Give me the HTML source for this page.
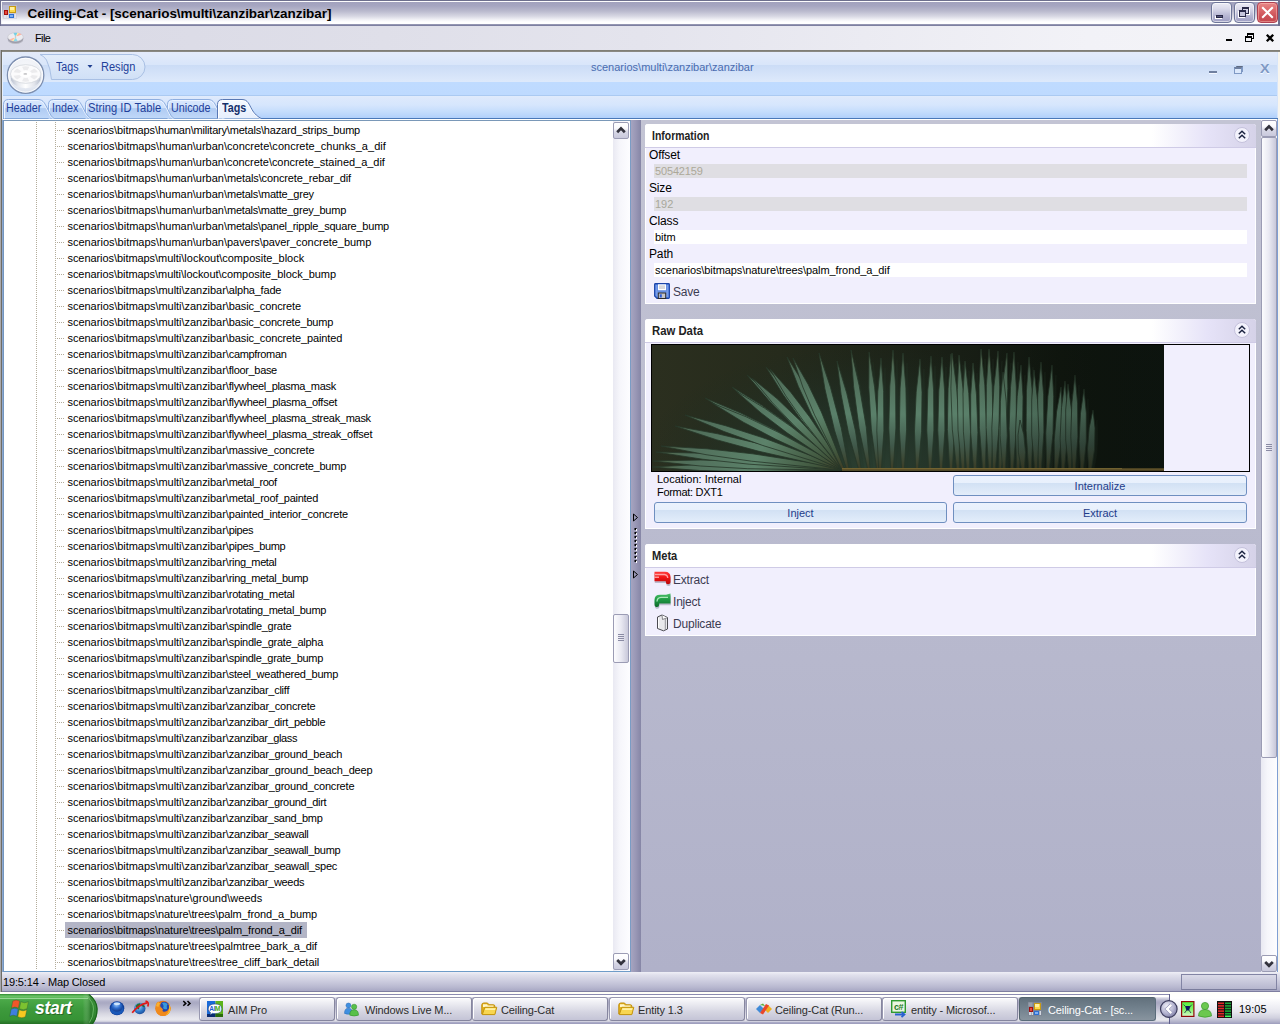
<!DOCTYPE html>
<html><head><meta charset="utf-8"><title>Ceiling-Cat - [scenarios\multi\zanzibar\zanzibar]</title>
<style>
html,body{margin:0;padding:0}
body{width:1280px;height:1024px;position:relative;overflow:hidden;background:#d9d9e5;font:11px "Liberation Sans",sans-serif;color:#000}
.a{position:absolute}
.t{position:absolute;white-space:nowrap;line-height:14px}
.sx{transform-origin:0 0}
svg{position:absolute;overflow:visible}
/* title bar */
#title{left:0;top:0;width:1280px;height:26px;background:linear-gradient(#6d6f8d 0,#6d6f8d 1px,#fdfdfe 1px,#fdfdfe 2px,#a1a1bd 2px,#a6a6c1 6px,#b9b9cd 11px,#d6d6e2 16px,#f4f4f8 20px,#fff 22px,#fff 24px,#9496b2 24px,#9496b2 25px,#7d7fa0 25px,#7d7fa0 26px)}
#title .cap{left:27.500px;top:5.500px;font:bold 13.500px "Liberation Sans",sans-serif;line-height:16px;color:#000;letter-spacing:-0.06px}
.cb{position:absolute;top:2px;width:21px;height:21px;border-radius:4px;box-sizing:border-box;border:1px solid #6e7699;background:linear-gradient(#ececf5 0,#dadaea 30%,#b8b8d4 65%,#9d9dc2 100%);box-shadow:0 0 0 1px rgba(255,255,255,.55) inset}
/* menu */
#menu{left:0;top:26px;width:1280px;height:24px;background:linear-gradient(90deg,#d9d9e5 0,#dfdfe9 30%,#e4e4ed 50%,#f2f2f7 85%,#f4f4f8 100%)}
/* tree */
.row{position:absolute;left:67.5px;height:16px;line-height:15px;white-space:nowrap;font-size:11px}
/* right panels */
.pnl{position:absolute;left:645px;width:611px;background:#f1effd;border-radius:3px 3px 0 0;box-sizing:border-box;border:1px solid #fff;border-top:0}
.pnl>*{margin-left:-1px}
.ph{position:absolute;left:0;top:0;width:611px;height:23px;border-radius:3px 3px 0 0;background:linear-gradient(90deg,#fff 0,#fff 83%,#e6e3f8 92%,#d5d2e8 100%);border-bottom:1px solid #cfcbe6}
.ph b{position:absolute;left:6.500px;top:5px;font:bold 12px "Liberation Sans",sans-serif;line-height:14px;color:#222;transform-origin:0 0;white-space:nowrap}
.tb{position:absolute;left:9px;width:593px;height:14px;line-height:14px;font-size:11px;white-space:nowrap;text-indent:1px}
.btn{position:absolute;height:21px;box-sizing:border-box;padding-top:1px;border:1px solid #6f8fc0;border-radius:3px;text-align:center;line-height:19px;color:#1e3c8a;font-size:11px;background:linear-gradient(#ebf2fd 0,#e8f0fc 36%,#d2e1f4 39%,#e3edfa 100%)}
.tk{position:absolute;top:997px;height:24px;width:136px;box-sizing:border-box;border-radius:3px;border:1px solid #9898b0;border-right-color:#86869f;border-bottom-color:#86869f;box-shadow:1px 1px 0 #fff inset;background:linear-gradient(#fbfbfd,#ececf2 25%,#d4d4e1 65%,#c4c4d6);font:11px "Liberation Sans",sans-serif;color:#2c2c2c}
.tk span{position:absolute;left:28px;top:4.500px;line-height:14px;white-space:nowrap;letter-spacing:-0.12px}
</style></head><body>

<div class="a" id="title">
 <svg style="left:3px;top:5px" width="14" height="14" viewBox="0 0 14 14">
  <rect x="0" y="0" width="14" height="14" fill="#c9c9d6" opacity=".55"/>
  <rect x="0.5" y="0.5" width="4" height="4" fill="#b8b8d2"/>
  <rect x="1" y="10" width="2" height="3" fill="#e4e4ee"/><rect x="3.5" y="10" width="1.5" height="3" fill="#e4e4ee"/><rect x="11.5" y="9" width="1.5" height="4" fill="#e4e4ee"/>
  <rect x="6" y="1" width="7" height="7" fill="#c79a13"/><rect x="7" y="2" width="5" height="5" fill="#fcd84a"/><rect x="7" y="2" width="4" height="3" fill="#fff0a0"/>
  <rect x="1" y="5" width="4" height="5" fill="#a30f0f"/><rect x="2" y="6" width="2" height="3" fill="#e84a3a"/>
  <rect x="6" y="9" width="5" height="4" fill="#2f6fd0"/><rect x="7" y="10" width="3" height="2" fill="#7fb0f4"/>
 </svg>
 <div class="a" style="left:0;top:0;width:1px;height:26px;background:#6d6f8d"></div><div class="a" style="left:1px;top:1px;width:1px;height:23px;background:#f4f4f8"></div>
 <div class="t cap">Ceiling-Cat - [scenarios\multi\zanzibar\zanzibar]</div>
 <div class="cb" style="left:1211px"><div class="a" style="left:4px;top:12px;width:7px;height:3px;background:#54547a;border:1px solid #2a2a48;box-sizing:border-box;box-shadow:-1px 1px 0 #fff"></div></div>
 <div class="cb" style="left:1234px">
   <div class="a" style="left:7px;top:4px;width:7px;height:7px;box-sizing:border-box;border:1px solid #2a2a48;border-top-width:2px;box-shadow:1px 1px 0 #fff"></div>
   <div class="a" style="left:4px;top:7px;width:7px;height:7px;box-sizing:border-box;border:1px solid #2a2a48;border-top-width:2px;background:#c6c6dc;box-shadow:-1px 1px 0 #fff"></div>
 </div>
 <div class="cb" style="left:1257px;border-color:#b04050;background:linear-gradient(#e88888 0,#dc6a6c 35%,#cc5258 70%,#c4484e 100%);box-shadow:0 0 0 1px rgba(255,200,190,.45) inset">
   <svg style="left:3px;top:3px" width="13" height="13" viewBox="0 0 13 13"><path d="M1.200 1.200 L11.800 11.800 M11.800 1.200 L1.200 11.800" stroke="#fff" stroke-width="2" stroke-linecap="butt"/></svg>
 </div>
</div>

<div class="a" id="menu">
 <svg style="left:7px;top:5px" width="17" height="13" viewBox="0 0 17 13">
  <ellipse cx="8.5" cy="8.800" rx="7.800" ry="4.300" fill="#b9b9c4"/><ellipse cx="8.5" cy="7.600" rx="7.800" ry="4.300" fill="#9c9ca8"/>
  <ellipse cx="8.5" cy="6" rx="7.8" ry="4.3" fill="#ececf0" stroke="#c4c4cc" stroke-width=".6"/>
  <path d="M8.5 6 L6.5 2 A7.8 4.3 0 0 1 10.5 2 Z" fill="#74cfe4"/>
  <path d="M8.5 6 L11 2.1 A7.8 4.3 0 0 1 14.6 3.5 Z" fill="#ffb0a0"/>
  <path d="M8.5 6 L10.5 10 A7.8 4.3 0 0 1 6.5 10 Z" fill="#8ad8ea"/>
  <path d="M8.5 6 L6 9.9 A7.8 4.3 0 0 1 2.4 8.5 Z" fill="#ffb8a8"/>
  <path d="M8.5 6 L6.4 10 A7.8 4.3 0 0 1 5 9.7 Z" fill="#fff3a0"/>
  <path d="M8.5 6 L10.6 2 A7.8 4.3 0 0 1 12 2.3 Z" fill="#fff3a0"/>
  <ellipse cx="8.5" cy="6" rx="2.2" ry="1.3" fill="#f4f4f6"/><ellipse cx="8.5" cy="6" rx="1" ry=".7" fill="#b4b4bc"/>
 </svg>
 <div class="t" style="left:35px;top:5px;font-size:11px;letter-spacing:-.6px">File</div>
 <div class="a" style="left:1226px;top:13px;width:6px;height:2px;background:#000"></div>
 <div class="a" style="left:1247px;top:7px;width:7px;height:6px;box-sizing:border-box;border:1px solid #000;border-top-width:2px"></div>
 <div class="a" style="left:1245px;top:10px;width:7px;height:6px;box-sizing:border-box;border:1px solid #000;border-top-width:2px;background:#f3f3f7"></div>
 <svg style="left:1266px;top:8px" width="8" height="8" viewBox="0 0 8 8"><path d="M.8 .8 L7.2 7.2 M7.2 .8 L.8 7.2" stroke="#000" stroke-width="2.300"/></svg>
 <div class="a" style="left:1278px;top:-26px;width:2px;height:26px;background:#6d6f8d"></div>
</div>
<div class="a" style="left:0;top:50px;width:1280px;height:2px;background:linear-gradient(#7c7a70,#8e8d88)"></div>

<div class="a" style="left:0;top:52px;width:1280px;height:46px;background:linear-gradient(#e4ebfa 0,#d9e6fa 12.500px,#cbdcf6 13px,#dde9fb 29.500px,#bfdbff 30px,#bedaff 43px,#abcaf2 43px,#abcaf2 44px,#e0ebfc 44px,#dde9fc 46px)"></div>
<div class="a" style="left:0;top:50px;width:1px;height:942px;background:#a9a9ae"></div><div class="a" style="left:1px;top:50px;width:1px;height:942px;background:#6f6d64"></div>
<div class="a" style="left:2px;top:52px;width:1px;height:67px;background:#e4eefc"></div>
<svg style="left:0;top:52px" width="320" height="46" viewBox="0 52 320 46">
 <defs>
  <linearGradient id="pill" x1="0" y1="0" x2="0" y2="1"><stop offset="0" stop-color="#e3edfb"/><stop offset="1" stop-color="#d0e0f6"/></linearGradient>
  <radialGradient id="orb" cx=".5" cy=".3" r=".8"><stop offset="0" stop-color="#f6f7fa"/><stop offset=".6" stop-color="#eceff5"/><stop offset="1" stop-color="#cfd8e8"/></radialGradient><linearGradient id="orbside" x1="0" y1="0" x2="1" y2="0"><stop offset="0" stop-color="#b9c0cf"/><stop offset=".25" stop-color="#e6e9ef"/><stop offset=".5" stop-color="#ffffff"/><stop offset=".78" stop-color="#e2e5ec"/><stop offset="1" stop-color="#b4bccb"/></linearGradient>
 </defs>
 <path d="M40 54.5 H132.500 A12.500 12.500 0 0 1 132.500 79.500 H51.500 Q50.500 68 46.500 60 Q44 56 40 54.500 Z" fill="url(#pill)" stroke="#a9c0e4" stroke-width="1"/>
 <circle cx="25.600" cy="75.200" r="18.200" fill="url(#orb)" stroke="#7d8fb0" stroke-width="1.300"/>
 <circle cx="25.600" cy="75.200" r="16.900" fill="none" stroke="#fff" stroke-width="1" opacity=".85"/>
 <path d="M10.500 74 A15.200 9.300 0 0 0 40.900 74 L40.300 80.500 A15.500 11.500 0 0 1 11.100 80.500 Z" fill="url(#orbside)"/>
 <ellipse cx="25.7" cy="74" rx="15.2" ry="9.3" fill="#fbfbfc" stroke="#cfd2d8" stroke-width=".7"/>
 <path d="M22.06 66.71 A12.46 7.63 0 0 1 29.34 66.71 L27.57 70.26 A6.38 3.91 0 0 0 23.83 70.26 Z M34.20 68.42 A12.46 7.63 0 0 1 37.84 72.28 L31.92 73.12 A6.38 3.91 0 0 0 30.05 71.14 Z M37.84 75.72 A12.46 7.63 0 0 1 34.20 79.58 L30.05 76.86 A6.38 3.91 0 0 0 31.92 74.88 Z M29.34 81.29 A12.46 7.63 0 0 1 22.06 81.29 L23.83 77.74 A6.38 3.91 0 0 0 27.57 77.74 Z M17.20 79.58 A12.46 7.63 0 0 1 13.56 75.72 L19.48 74.88 A6.38 3.91 0 0 0 21.35 76.86 Z M13.56 72.28 A12.46 7.63 0 0 1 17.20 68.42 L21.35 71.14 A6.38 3.91 0 0 0 19.48 73.12 Z" fill="#ebebed"/>
 <ellipse cx="25.7" cy="74" rx="5.600" ry="3.300" fill="#fff"/><ellipse cx="25.3" cy="73.9" rx="1.900" ry=".9" fill="#c6c6c8"/>
 <path d="M87.500 65 h5 l-2.500 3 z" fill="#1f3f8f"/>
</svg>
<div class="t sx" style="left:55.500px;top:59.500px;font-size:12px;color:#22409a;transform:scaleX(.89)">Tags</div>
<div class="t sx" style="left:100.500px;top:59.500px;font-size:12px;color:#22409a;transform:scaleX(.92)">Resign</div>
<div class="t" style="left:591px;top:60px;font-size:11px;color:#4a6cb0;letter-spacing:0">scenarios\multi\zanzibar\zanzibar</div>
<div class="a" style="left:1209px;top:71px;width:8px;height:2px;background:#6f80a0;box-shadow:0 1px 0 #f4f8ff"></div>
<div class="a" style="left:1236px;top:66px;width:7px;height:6px;box-sizing:border-box;border:1px solid #7f99c4;border-top-color:#5f6a80"></div>
<div class="a" style="left:1234px;top:67px;width:8px;height:7px;box-sizing:border-box;border:1px solid #7f99c4;border-top:2px solid #6f80a0;background:#dbe8fb"></div>
<div class="t" style="left:1259.500px;top:62px;font:bold 12.500px 'Liberation Sans',sans-serif;line-height:14px;color:#7f99c4;text-shadow:0 1px 0 #f4f8ff;transform:scaleX(1.15);transform-origin:0 0">X</div>

<div class="a" style="left:3px;top:98px;width:1275px;height:21px;background:linear-gradient(#dde9fc 0,#d6e6fd 7px,#c4dcfc 14px,#b1d0fb 20px,#4a78b8 20px,#4a78b8 21px)"></div>
<svg style="left:0;top:0" width="300" height="120" viewBox="0 0 300 120">
 <defs>
  <linearGradient id="tabN" x1="0" y1="0" x2="0" y2="1"><stop offset="0" stop-color="#d8e7fd"/><stop offset=".42" stop-color="#cfe1fb"/><stop offset=".48" stop-color="#b0cbf2"/><stop offset="1" stop-color="#c0d8f9"/></linearGradient>
  <linearGradient id="tabA" x1="0" y1="0" x2="0" y2="1"><stop offset="0" stop-color="#f6f9ff"/><stop offset="1" stop-color="#e6effd"/></linearGradient>
 </defs>
<path d="M167.5 118.5 V104.5 Q167.5 99.5 172.5 99.5 H208 C214 99.5 215 104.5 218 109.5 C220 113.5 221.5 117.5 224.5 118.5 Z" fill="url(#tabN)"/><path d="M168.5 118.5 V104.5 Q168.5 100.5 172.5 100.5 H208 C213 100.5 214 104.5 217 109.5 C219 113.5 220.5 117.5 223.5 118.5" fill="none" stroke="#eef5ff" stroke-width="1" opacity=".9"/><path d="M167.5 118.5 V104.5 Q167.5 99.5 172.5 99.5 H208 C214 99.5 215 104.5 218 109.5 C220 113.5 221.5 117.5 224.5 118.5" fill="none" stroke="#8eaee0" stroke-width="1"/><path d="M85.5 118.5 V104.5 Q85.5 99.5 90.5 99.5 H158 C164 99.5 165 104.5 168 109.5 C170 113.5 171.5 117.5 174.5 118.5 Z" fill="url(#tabN)"/><path d="M86.5 118.5 V104.5 Q86.5 100.5 90.5 100.5 H158 C163 100.5 164 104.5 167 109.5 C169 113.5 170.5 117.5 173.5 118.5" fill="none" stroke="#eef5ff" stroke-width="1" opacity=".9"/><path d="M85.5 118.5 V104.5 Q85.5 99.5 90.5 99.5 H158 C164 99.5 165 104.5 168 109.5 C170 113.5 171.5 117.5 174.5 118.5" fill="none" stroke="#8eaee0" stroke-width="1"/><path d="M48.5 118.5 V104.5 Q48.5 99.5 53.5 99.5 H74 C80 99.5 81 104.5 84 109.5 C86 113.5 88.5 117.5 91.5 118.5 Z" fill="url(#tabN)"/><path d="M49.5 118.5 V104.5 Q49.5 100.5 53.5 100.5 H74 C79 100.5 80 104.5 83 109.5 C85 113.5 87.5 117.5 90.5 118.5" fill="none" stroke="#eef5ff" stroke-width="1" opacity=".9"/><path d="M48.5 118.5 V104.5 Q48.5 99.5 53.5 99.5 H74 C80 99.5 81 104.5 84 109.5 C86 113.5 88.5 117.5 91.5 118.5" fill="none" stroke="#8eaee0" stroke-width="1"/><path d="M3.5 118.5 V104.5 Q3.5 99.5 8.5 99.5 H38 C44 99.5 45 104.5 48 109.5 C50 113.5 51.5 117.5 54.5 118.5 Z" fill="url(#tabN)"/><path d="M4.5 118.5 V104.5 Q4.5 100.5 8.5 100.5 H38 C43 100.5 44 104.5 47 109.5 C49 113.5 50.5 117.5 53.5 118.5" fill="none" stroke="#eef5ff" stroke-width="1" opacity=".9"/><path d="M3.5 118.5 V104.5 Q3.5 99.5 8.5 99.5 H38 C44 99.5 45 104.5 48 109.5 C50 113.5 51.5 117.5 54.5 118.5" fill="none" stroke="#8eaee0" stroke-width="1"/><path d="M217.5 118.5 V104.5 Q217.5 99.5 222.5 99.5 H242 C248 99.5 249 104.5 252 109.5 C254 113.5 258.5 117.5 261.5 118.5 Z" fill="url(#tabA)"/><path d="M218.5 118.5 V104.5 Q218.5 100.5 222.5 100.5 H242 C247 100.5 248 104.5 251 109.5 C253 113.5 257.5 117.5 260.5 118.5" fill="none" stroke="#ffffff" stroke-width="1" opacity=".9"/><path d="M217.5 118.5 V104.5 Q217.5 99.5 222.5 99.5 H242 C248 99.5 249 104.5 252 109.5 C254 113.5 258.5 117.5 261.5 118.5" fill="none" stroke="#5878b4" stroke-width="1"/>
</svg>
<div class="t sx" style="left:5.5px;top:100.500px;font-size:12.500px;color:#1f3f9a;transform:scaleX(0.86)">Header</div><div class="t sx" style="left:51.5px;top:100.500px;font-size:12.500px;color:#1f3f9a;transform:scaleX(0.86)">Index</div><div class="t sx" style="left:87.5px;top:100.500px;font-size:12.500px;color:#1f3f9a;transform:scaleX(0.895)">String ID Table</div><div class="t sx" style="left:171px;top:100.500px;font-size:12.500px;color:#1f3f9a;transform:scaleX(0.86)">Unicode</div><div class="t sx" style="left:221.5px;top:100.500px;font:bold 12.500px 'Liberation Sans',sans-serif;line-height:14px;color:#15306b;transform:scaleX(0.86)">Tags</div>
<div class="a" style="left:3px;top:119px;width:628px;height:853px;background:#fff"></div><div class="a" style="left:3px;top:971px;width:628px;height:1px;background:#6f9cc8"></div><div class="a" style="left:630px;top:120px;width:1px;height:852px;background:#7a9cc4"></div>
<div class="a" style="left:3px;top:119px;width:1275px;height:1px;background:#fff"></div><div class="a" style="left:2px;top:120px;width:629px;height:1px;background:#7a98b8"></div><div class="a" style="left:2px;top:120px;width:1px;height:852px;background:#8ea8d0"></div><div class="a" style="left:3px;top:120px;width:1px;height:852px;background:#7396be"></div>
<div class="a" style="left:36px;top:122px;width:1px;height:848px;background:repeating-linear-gradient(#b3ac9a 0,#b3ac9a 1px,transparent 1px,transparent 2px)"></div>
<div class="a" style="left:55px;top:122px;width:1px;height:848px;background:repeating-linear-gradient(#b3ac9a 0,#b3ac9a 1px,transparent 1px,transparent 2px)"></div>
<div class="a" style="left:56px;top:130px;width:8px;height:1px;background:repeating-linear-gradient(90deg,transparent 0,transparent 1px,#b3ac9a 1px,#b3ac9a 2px)"></div>
<div class="row" style="top:123px"><span style="letter-spacing:-0.067px">scenarios\bitmaps\</span><span style="letter-spacing:-0.192px">human\military\metals\hazard_strips_bump</span></div>
<div class="a" style="left:56px;top:146px;width:8px;height:1px;background:repeating-linear-gradient(90deg,transparent 0,transparent 1px,#b3ac9a 1px,#b3ac9a 2px)"></div>
<div class="row" style="top:139px"><span style="letter-spacing:-0.003px">scenarios\bitmaps\human\urban\</span><span style="letter-spacing:0.014px">concrete\concrete_chunks_a_dif</span></div>
<div class="a" style="left:56px;top:162px;width:8px;height:1px;background:repeating-linear-gradient(90deg,transparent 0,transparent 1px,#b3ac9a 1px,#b3ac9a 2px)"></div>
<div class="row" style="top:155px"><span style="letter-spacing:-0.003px">scenarios\bitmaps\human\urban\</span><span style="letter-spacing:-0.038px">concrete\concrete_stained_a_dif</span></div>
<div class="a" style="left:56px;top:178px;width:8px;height:1px;background:repeating-linear-gradient(90deg,transparent 0,transparent 1px,#b3ac9a 1px,#b3ac9a 2px)"></div>
<div class="row" style="top:171px"><span style="letter-spacing:-0.003px">scenarios\bitmaps\human\urban\</span><span style="letter-spacing:-0.127px">metals\concrete_rebar_dif</span></div>
<div class="a" style="left:56px;top:194px;width:8px;height:1px;background:repeating-linear-gradient(90deg,transparent 0,transparent 1px,#b3ac9a 1px,#b3ac9a 2px)"></div>
<div class="row" style="top:187px"><span style="letter-spacing:-0.003px">scenarios\bitmaps\human\urban\</span><span style="letter-spacing:-0.210px">metals\matte_grey</span></div>
<div class="a" style="left:56px;top:210px;width:8px;height:1px;background:repeating-linear-gradient(90deg,transparent 0,transparent 1px,#b3ac9a 1px,#b3ac9a 2px)"></div>
<div class="row" style="top:203px"><span style="letter-spacing:-0.003px">scenarios\bitmaps\human\urban\</span><span style="letter-spacing:-0.232px">metals\matte_grey_bump</span></div>
<div class="a" style="left:56px;top:226px;width:8px;height:1px;background:repeating-linear-gradient(90deg,transparent 0,transparent 1px,#b3ac9a 1px,#b3ac9a 2px)"></div>
<div class="row" style="top:219px"><span style="letter-spacing:-0.003px">scenarios\bitmaps\human\urban\</span><span style="letter-spacing:-0.218px">metals\panel_ripple_square_bump</span></div>
<div class="a" style="left:56px;top:242px;width:8px;height:1px;background:repeating-linear-gradient(90deg,transparent 0,transparent 1px,#b3ac9a 1px,#b3ac9a 2px)"></div>
<div class="row" style="top:235px"><span style="letter-spacing:-0.003px">scenarios\bitmaps\human\urban\</span><span style="letter-spacing:-0.051px">pavers\paver_concrete_bump</span></div>
<div class="a" style="left:56px;top:258px;width:8px;height:1px;background:repeating-linear-gradient(90deg,transparent 0,transparent 1px,#b3ac9a 1px,#b3ac9a 2px)"></div>
<div class="row" style="top:251px"><span style="letter-spacing:-0.067px">scenarios\bitmaps\</span><span style="letter-spacing:0.003px">multi\lockout\composite_block</span></div>
<div class="a" style="left:56px;top:274px;width:8px;height:1px;background:repeating-linear-gradient(90deg,transparent 0,transparent 1px,#b3ac9a 1px,#b3ac9a 2px)"></div>
<div class="row" style="top:267px"><span style="letter-spacing:-0.067px">scenarios\bitmaps\</span><span style="letter-spacing:-0.051px">multi\lockout\composite_block_bump</span></div>
<div class="a" style="left:56px;top:290px;width:8px;height:1px;background:repeating-linear-gradient(90deg,transparent 0,transparent 1px,#b3ac9a 1px,#b3ac9a 2px)"></div>
<div class="row" style="top:283px"><span style="letter-spacing:-0.040px">scenarios\bitmaps\multi\zanzibar\</span><span style="letter-spacing:-0.204px">alpha_fade</span></div>
<div class="a" style="left:56px;top:306px;width:8px;height:1px;background:repeating-linear-gradient(90deg,transparent 0,transparent 1px,#b3ac9a 1px,#b3ac9a 2px)"></div>
<div class="row" style="top:299px"><span style="letter-spacing:-0.040px">scenarios\bitmaps\multi\zanzibar\</span><span style="letter-spacing:-0.127px">basic_concrete</span></div>
<div class="a" style="left:56px;top:322px;width:8px;height:1px;background:repeating-linear-gradient(90deg,transparent 0,transparent 1px,#b3ac9a 1px,#b3ac9a 2px)"></div>
<div class="row" style="top:315px"><span style="letter-spacing:-0.040px">scenarios\bitmaps\multi\zanzibar\</span><span style="letter-spacing:-0.169px">basic_concrete_bump</span></div>
<div class="a" style="left:56px;top:338px;width:8px;height:1px;background:repeating-linear-gradient(90deg,transparent 0,transparent 1px,#b3ac9a 1px,#b3ac9a 2px)"></div>
<div class="row" style="top:331px"><span style="letter-spacing:-0.040px">scenarios\bitmaps\multi\zanzibar\</span><span style="letter-spacing:-0.127px">basic_concrete_painted</span></div>
<div class="a" style="left:56px;top:354px;width:8px;height:1px;background:repeating-linear-gradient(90deg,transparent 0,transparent 1px,#b3ac9a 1px,#b3ac9a 2px)"></div>
<div class="row" style="top:347px"><span style="letter-spacing:-0.040px">scenarios\bitmaps\multi\zanzibar\</span><span style="letter-spacing:-0.353px">campfroman</span></div>
<div class="a" style="left:56px;top:370px;width:8px;height:1px;background:repeating-linear-gradient(90deg,transparent 0,transparent 1px,#b3ac9a 1px,#b3ac9a 2px)"></div>
<div class="row" style="top:363px"><span style="letter-spacing:-0.040px">scenarios\bitmaps\multi\zanzibar\</span><span style="letter-spacing:-0.327px">floor_base</span></div>
<div class="a" style="left:56px;top:386px;width:8px;height:1px;background:repeating-linear-gradient(90deg,transparent 0,transparent 1px,#b3ac9a 1px,#b3ac9a 2px)"></div>
<div class="row" style="top:379px"><span style="letter-spacing:-0.040px">scenarios\bitmaps\multi\zanzibar\</span><span style="letter-spacing:-0.336px">flywheel_plasma_mask</span></div>
<div class="a" style="left:56px;top:402px;width:8px;height:1px;background:repeating-linear-gradient(90deg,transparent 0,transparent 1px,#b3ac9a 1px,#b3ac9a 2px)"></div>
<div class="row" style="top:395px"><span style="letter-spacing:-0.040px">scenarios\bitmaps\multi\zanzibar\</span><span style="letter-spacing:-0.270px">flywheel_plasma_offset</span></div>
<div class="a" style="left:56px;top:418px;width:8px;height:1px;background:repeating-linear-gradient(90deg,transparent 0,transparent 1px,#b3ac9a 1px,#b3ac9a 2px)"></div>
<div class="row" style="top:411px"><span style="letter-spacing:-0.040px">scenarios\bitmaps\multi\zanzibar\</span><span style="letter-spacing:-0.288px">flywheel_plasma_streak_mask</span></div>
<div class="a" style="left:56px;top:434px;width:8px;height:1px;background:repeating-linear-gradient(90deg,transparent 0,transparent 1px,#b3ac9a 1px,#b3ac9a 2px)"></div>
<div class="row" style="top:427px"><span style="letter-spacing:-0.040px">scenarios\bitmaps\multi\zanzibar\</span><span style="letter-spacing:-0.231px">flywheel_plasma_streak_offset</span></div>
<div class="a" style="left:56px;top:450px;width:8px;height:1px;background:repeating-linear-gradient(90deg,transparent 0,transparent 1px,#b3ac9a 1px,#b3ac9a 2px)"></div>
<div class="row" style="top:443px"><span style="letter-spacing:-0.040px">scenarios\bitmaps\multi\zanzibar\</span><span style="letter-spacing:-0.197px">massive_concrete</span></div>
<div class="a" style="left:56px;top:466px;width:8px;height:1px;background:repeating-linear-gradient(90deg,transparent 0,transparent 1px,#b3ac9a 1px,#b3ac9a 2px)"></div>
<div class="row" style="top:459px"><span style="letter-spacing:-0.040px">scenarios\bitmaps\multi\zanzibar\</span><span style="letter-spacing:-0.242px">massive_concrete_bump</span></div>
<div class="a" style="left:56px;top:482px;width:8px;height:1px;background:repeating-linear-gradient(90deg,transparent 0,transparent 1px,#b3ac9a 1px,#b3ac9a 2px)"></div>
<div class="row" style="top:475px"><span style="letter-spacing:-0.040px">scenarios\bitmaps\multi\zanzibar\</span><span style="letter-spacing:-0.407px">metal_roof</span></div>
<div class="a" style="left:56px;top:498px;width:8px;height:1px;background:repeating-linear-gradient(90deg,transparent 0,transparent 1px,#b3ac9a 1px,#b3ac9a 2px)"></div>
<div class="row" style="top:491px"><span style="letter-spacing:-0.040px">scenarios\bitmaps\multi\zanzibar\</span><span style="letter-spacing:-0.276px">metal_roof_painted</span></div>
<div class="a" style="left:56px;top:514px;width:8px;height:1px;background:repeating-linear-gradient(90deg,transparent 0,transparent 1px,#b3ac9a 1px,#b3ac9a 2px)"></div>
<div class="row" style="top:507px"><span style="letter-spacing:-0.040px">scenarios\bitmaps\multi\zanzibar\</span><span style="letter-spacing:-0.197px">painted_interior_concrete</span></div>
<div class="a" style="left:56px;top:530px;width:8px;height:1px;background:repeating-linear-gradient(90deg,transparent 0,transparent 1px,#b3ac9a 1px,#b3ac9a 2px)"></div>
<div class="row" style="top:523px"><span style="letter-spacing:-0.040px">scenarios\bitmaps\multi\zanzibar\</span><span style="letter-spacing:-0.419px">pipes</span></div>
<div class="a" style="left:56px;top:546px;width:8px;height:1px;background:repeating-linear-gradient(90deg,transparent 0,transparent 1px,#b3ac9a 1px,#b3ac9a 2px)"></div>
<div class="row" style="top:539px"><span style="letter-spacing:-0.040px">scenarios\bitmaps\multi\zanzibar\</span><span style="letter-spacing:-0.343px">pipes_bump</span></div>
<div class="a" style="left:56px;top:562px;width:8px;height:1px;background:repeating-linear-gradient(90deg,transparent 0,transparent 1px,#b3ac9a 1px,#b3ac9a 2px)"></div>
<div class="row" style="top:555px"><span style="letter-spacing:-0.040px">scenarios\bitmaps\multi\zanzibar\</span><span style="letter-spacing:-0.385px">ring_metal</span></div>
<div class="a" style="left:56px;top:578px;width:8px;height:1px;background:repeating-linear-gradient(90deg,transparent 0,transparent 1px,#b3ac9a 1px,#b3ac9a 2px)"></div>
<div class="row" style="top:571px"><span style="letter-spacing:-0.040px">scenarios\bitmaps\multi\zanzibar\</span><span style="letter-spacing:-0.386px">ring_metal_bump</span></div>
<div class="a" style="left:56px;top:594px;width:8px;height:1px;background:repeating-linear-gradient(90deg,transparent 0,transparent 1px,#b3ac9a 1px,#b3ac9a 2px)"></div>
<div class="row" style="top:587px"><span style="letter-spacing:-0.040px">scenarios\bitmaps\multi\zanzibar\</span><span style="letter-spacing:-0.286px">rotating_metal</span></div>
<div class="a" style="left:56px;top:610px;width:8px;height:1px;background:repeating-linear-gradient(90deg,transparent 0,transparent 1px,#b3ac9a 1px,#b3ac9a 2px)"></div>
<div class="row" style="top:603px"><span style="letter-spacing:-0.040px">scenarios\bitmaps\multi\zanzibar\</span><span style="letter-spacing:-0.323px">rotating_metal_bump</span></div>
<div class="a" style="left:56px;top:626px;width:8px;height:1px;background:repeating-linear-gradient(90deg,transparent 0,transparent 1px,#b3ac9a 1px,#b3ac9a 2px)"></div>
<div class="row" style="top:619px"><span style="letter-spacing:-0.040px">scenarios\bitmaps\multi\zanzibar\</span><span style="letter-spacing:-0.273px">spindle_grate</span></div>
<div class="a" style="left:56px;top:642px;width:8px;height:1px;background:repeating-linear-gradient(90deg,transparent 0,transparent 1px,#b3ac9a 1px,#b3ac9a 2px)"></div>
<div class="row" style="top:635px"><span style="letter-spacing:-0.040px">scenarios\bitmaps\multi\zanzibar\</span><span style="letter-spacing:-0.256px">spindle_grate_alpha</span></div>
<div class="a" style="left:56px;top:658px;width:8px;height:1px;background:repeating-linear-gradient(90deg,transparent 0,transparent 1px,#b3ac9a 1px,#b3ac9a 2px)"></div>
<div class="row" style="top:651px"><span style="letter-spacing:-0.040px">scenarios\bitmaps\multi\zanzibar\</span><span style="letter-spacing:-0.304px">spindle_grate_bump</span></div>
<div class="a" style="left:56px;top:674px;width:8px;height:1px;background:repeating-linear-gradient(90deg,transparent 0,transparent 1px,#b3ac9a 1px,#b3ac9a 2px)"></div>
<div class="row" style="top:667px"><span style="letter-spacing:-0.040px">scenarios\bitmaps\multi\zanzibar\</span><span style="letter-spacing:-0.257px">steel_weathered_bump</span></div>
<div class="a" style="left:56px;top:690px;width:8px;height:1px;background:repeating-linear-gradient(90deg,transparent 0,transparent 1px,#b3ac9a 1px,#b3ac9a 2px)"></div>
<div class="row" style="top:683px"><span style="letter-spacing:-0.040px">scenarios\bitmaps\multi\zanzibar\</span><span style="letter-spacing:-0.257px">zanzibar_cliff</span></div>
<div class="a" style="left:56px;top:706px;width:8px;height:1px;background:repeating-linear-gradient(90deg,transparent 0,transparent 1px,#b3ac9a 1px,#b3ac9a 2px)"></div>
<div class="row" style="top:699px"><span style="letter-spacing:-0.040px">scenarios\bitmaps\multi\zanzibar\</span><span style="letter-spacing:-0.193px">zanzibar_concrete</span></div>
<div class="a" style="left:56px;top:722px;width:8px;height:1px;background:repeating-linear-gradient(90deg,transparent 0,transparent 1px,#b3ac9a 1px,#b3ac9a 2px)"></div>
<div class="row" style="top:715px"><span style="letter-spacing:-0.040px">scenarios\bitmaps\multi\zanzibar\</span><span style="letter-spacing:-0.281px">zanzibar_dirt_pebble</span></div>
<div class="a" style="left:56px;top:738px;width:8px;height:1px;background:repeating-linear-gradient(90deg,transparent 0,transparent 1px,#b3ac9a 1px,#b3ac9a 2px)"></div>
<div class="row" style="top:731px"><span style="letter-spacing:-0.040px">scenarios\bitmaps\multi\zanzibar\</span><span style="letter-spacing:-0.369px">zanzibar_glass</span></div>
<div class="a" style="left:56px;top:754px;width:8px;height:1px;background:repeating-linear-gradient(90deg,transparent 0,transparent 1px,#b3ac9a 1px,#b3ac9a 2px)"></div>
<div class="row" style="top:747px"><span style="letter-spacing:-0.040px">scenarios\bitmaps\multi\zanzibar\</span><span style="letter-spacing:-0.220px">zanzibar_ground_beach</span></div>
<div class="a" style="left:56px;top:770px;width:8px;height:1px;background:repeating-linear-gradient(90deg,transparent 0,transparent 1px,#b3ac9a 1px,#b3ac9a 2px)"></div>
<div class="row" style="top:763px"><span style="letter-spacing:-0.040px">scenarios\bitmaps\multi\zanzibar\</span><span style="letter-spacing:-0.197px">zanzibar_ground_beach_deep</span></div>
<div class="a" style="left:56px;top:786px;width:8px;height:1px;background:repeating-linear-gradient(90deg,transparent 0,transparent 1px,#b3ac9a 1px,#b3ac9a 2px)"></div>
<div class="row" style="top:779px"><span style="letter-spacing:-0.040px">scenarios\bitmaps\multi\zanzibar\</span><span style="letter-spacing:-0.198px">zanzibar_ground_concrete</span></div>
<div class="a" style="left:56px;top:802px;width:8px;height:1px;background:repeating-linear-gradient(90deg,transparent 0,transparent 1px,#b3ac9a 1px,#b3ac9a 2px)"></div>
<div class="row" style="top:795px"><span style="letter-spacing:-0.040px">scenarios\bitmaps\multi\zanzibar\</span><span style="letter-spacing:-0.292px">zanzibar_ground_dirt</span></div>
<div class="a" style="left:56px;top:818px;width:8px;height:1px;background:repeating-linear-gradient(90deg,transparent 0,transparent 1px,#b3ac9a 1px,#b3ac9a 2px)"></div>
<div class="row" style="top:811px"><span style="letter-spacing:-0.040px">scenarios\bitmaps\multi\zanzibar\</span><span style="letter-spacing:-0.315px">zanzibar_sand_bmp</span></div>
<div class="a" style="left:56px;top:834px;width:8px;height:1px;background:repeating-linear-gradient(90deg,transparent 0,transparent 1px,#b3ac9a 1px,#b3ac9a 2px)"></div>
<div class="row" style="top:827px"><span style="letter-spacing:-0.040px">scenarios\bitmaps\multi\zanzibar\</span><span style="letter-spacing:-0.292px">zanzibar_seawall</span></div>
<div class="a" style="left:56px;top:850px;width:8px;height:1px;background:repeating-linear-gradient(90deg,transparent 0,transparent 1px,#b3ac9a 1px,#b3ac9a 2px)"></div>
<div class="row" style="top:843px"><span style="letter-spacing:-0.040px">scenarios\bitmaps\multi\zanzibar\</span><span style="letter-spacing:-0.310px">zanzibar_seawall_bump</span></div>
<div class="a" style="left:56px;top:866px;width:8px;height:1px;background:repeating-linear-gradient(90deg,transparent 0,transparent 1px,#b3ac9a 1px,#b3ac9a 2px)"></div>
<div class="row" style="top:859px"><span style="letter-spacing:-0.040px">scenarios\bitmaps\multi\zanzibar\</span><span style="letter-spacing:-0.263px">zanzibar_seawall_spec</span></div>
<div class="a" style="left:56px;top:882px;width:8px;height:1px;background:repeating-linear-gradient(90deg,transparent 0,transparent 1px,#b3ac9a 1px,#b3ac9a 2px)"></div>
<div class="row" style="top:875px"><span style="letter-spacing:-0.040px">scenarios\bitmaps\multi\zanzibar\</span><span style="letter-spacing:-0.292px">zanzibar_weeds</span></div>
<div class="a" style="left:56px;top:898px;width:8px;height:1px;background:repeating-linear-gradient(90deg,transparent 0,transparent 1px,#b3ac9a 1px,#b3ac9a 2px)"></div>
<div class="row" style="top:891px"><span style="letter-spacing:-0.067px">scenarios\bitmaps\</span><span style="letter-spacing:0.050px">nature\ground\weeds</span></div>
<div class="a" style="left:56px;top:914px;width:8px;height:1px;background:repeating-linear-gradient(90deg,transparent 0,transparent 1px,#b3ac9a 1px,#b3ac9a 2px)"></div>
<div class="row" style="top:907px"><span style="letter-spacing:-0.067px">scenarios\bitmaps\</span><span style="letter-spacing:-0.122px">nature\trees\palm_frond_a_bump</span></div>
<div class="a" style="left:56px;top:930px;width:8px;height:1px;background:repeating-linear-gradient(90deg,transparent 0,transparent 1px,#b3ac9a 1px,#b3ac9a 2px)"></div>
<div class="a" style="left:65px;top:922px;width:242px;height:16px;background:#b3b5c6"></div>
<div class="row" style="top:923px"><span style="letter-spacing:-0.067px">scenarios\bitmaps\</span><span style="letter-spacing:-0.095px">nature\trees\palm_frond_a_dif</span></div>
<div class="a" style="left:56px;top:946px;width:8px;height:1px;background:repeating-linear-gradient(90deg,transparent 0,transparent 1px,#b3ac9a 1px,#b3ac9a 2px)"></div>
<div class="row" style="top:939px"><span style="letter-spacing:-0.067px">scenarios\bitmaps\</span><span style="letter-spacing:-0.095px">nature\trees\palmtree_bark_a_dif</span></div>
<div class="a" style="left:56px;top:962px;width:8px;height:1px;background:repeating-linear-gradient(90deg,transparent 0,transparent 1px,#b3ac9a 1px,#b3ac9a 2px)"></div>
<div class="row" style="top:955px"><span style="letter-spacing:-0.067px">scenarios\bitmaps\</span><span style="letter-spacing:-0.053px">nature\trees\tree_cliff_bark_detail</span></div>
<div class="a" style="left:613px;top:121px;width:17px;height:850px;background:linear-gradient(90deg,#e9e9f2,#f6f6fb 40%,#fdfdff)"></div>
<div class="a" style="left:613px;top:122px;width:16px;height:17px;box-sizing:border-box;border:1px solid #9b9cb4;border-radius:2px;background:linear-gradient(#fff 0,#fafafd 35%,#d6d6e5 62%,#c9c9dc 100%)"><svg style="left:-1px;top:-1px" width="16" height="17" viewBox="0 0 16 17"><path d="M4.200 10.200 L8 6.400 L11.800 10.200" fill="none" stroke="#33333d" stroke-width="2.700"/></svg></div>
<div class="a" style="left:613px;top:953px;width:16px;height:17px;box-sizing:border-box;border:1px solid #9b9cb4;border-radius:2px;background:linear-gradient(#fff 0,#fafafd 35%,#d6d6e5 62%,#c9c9dc 100%)"><svg style="left:-1px;top:-1px" width="16" height="17" viewBox="0 0 16 17"><path d="M4.200 7 L8 10.800 L11.800 7" fill="none" stroke="#33333d" stroke-width="2.700"/></svg></div>
<div class="a" style="left:613px;top:614px;width:16px;height:49px;box-sizing:border-box;border:1px solid #9b9cb4;border-radius:2px;background:linear-gradient(90deg,#fcfcfe,#e9e9f2 50%,#c8c8da)"></div>
<div class="a" style="left:618px;top:634px;width:6px;height:1px;background:#8a8ba4"></div>
<div class="a" style="left:618px;top:636px;width:6px;height:1px;background:#8a8ba4"></div>
<div class="a" style="left:618px;top:638px;width:6px;height:1px;background:#8a8ba4"></div>
<div class="a" style="left:618px;top:640px;width:6px;height:1px;background:#8a8ba4"></div>
<div class="a" style="left:631px;top:120px;width:10px;height:852px;background:linear-gradient(90deg,#a6a4c0,#9a98b6 45%,#8686a6)"></div>
<svg style="left:631px;top:510px" width="10" height="72" viewBox="0 0 10 72"><path d="M2.500 4 L6.500 7.500 L2.500 11 Z M2.500 61 L6.500 64.500 L2.500 68 Z" fill="none" stroke="#000" stroke-width="1"/><path d="M4.500 18 V52" stroke="#000" stroke-width="2" stroke-dasharray="2 2"/><path d="M5.500 19 V53" stroke="#fff" stroke-width="1" stroke-dasharray="2 2"/></svg><div class="a" style="left:641px;top:120px;width:620px;height:852px;background:linear-gradient(#c3c4d4,#b0b1c9)"></div><div class="pnl" style="top:124px;height:180px"><div class="ph"><b style="transform:scaleX(0.87)">Information</b><svg style="left:588px;top:2px" width="18" height="18" viewBox="0 0 18 18"><circle cx="9" cy="9" r="7.500" fill="#f3f2fc" stroke="#c4c1dc" stroke-width="1"/><path d="M5.800 8.300 L9 5.300 L12.200 8.300 M5.800 12.300 L9 9.300 L12.200 12.300" fill="none" stroke="#1b2340" stroke-width="1.500"/></svg></div><div class="t" style="left:4px;top:24px;font-size:12px;color:#000;letter-spacing:-.15px">Offset</div><div class="tb" style="top:40px;background:#dfdee3;color:#aca899;letter-spacing:-.15px">50542159</div><div class="t" style="left:4px;top:57px;font-size:12px;color:#000;letter-spacing:-.15px">Size</div><div class="tb" style="top:73px;background:#dfdee3;color:#a8a89c">192</div><div class="t" style="left:4px;top:90px;font-size:12px;color:#000;letter-spacing:-.15px">Class</div><div class="tb" style="top:106px;background:#fff">bitm</div><div class="t" style="left:4px;top:123px;font-size:12px;color:#000;letter-spacing:-.15px">Path</div><div class="tb" style="top:139px;background:#fff;letter-spacing:-.08px">scenarios\bitmaps\nature\trees\palm_frond_a_dif</div><svg style="left:9px;top:159px" width="16" height="16" viewBox="0 0 16 16"><path d="M.6 1.500 Q.6 .6 1.500 .6 H14.500 Q15.400 .6 15.400 1.500 V14.500 Q15.400 15.400 14.500 15.400 H3 L.6 13 Z" fill="#4f7fdc" stroke="#1c44a8" stroke-width="1.100"/><path d="M1.700 2 H3.500 V8.500 H12.500 V2 H14.300 V14 H3.500 L1.700 12.300 Z" fill="#86a6ee" opacity=".75"/><rect x="4" y="1.300" width="8" height="6" fill="#fff"/><rect x="5" y="2.300" width="6" height="3.700" fill="#d8d8dc"/><rect x="4.300" y="10" width="7.400" height="5.500" fill="#c4c4c8" stroke="#2c2c2c" stroke-width="1"/><rect x="5.800" y="11.300" width="2" height="3.200" fill="#2a5ad8"/></svg><div class="t" style="left:28px;top:161px;font-size:12px;color:#3c3c52;letter-spacing:-.2px">Save</div></div><div class="pnl" style="top:319px;height:210px"><div class="ph"><b style="transform:scaleX(0.944)">Raw Data</b><svg style="left:588px;top:2px" width="18" height="18" viewBox="0 0 18 18"><circle cx="9" cy="9" r="7.500" fill="#f3f2fc" stroke="#c4c1dc" stroke-width="1"/><path d="M5.800 8.300 L9 5.300 L12.200 8.300 M5.800 12.300 L9 9.300 L12.200 12.300" fill="none" stroke="#1b2340" stroke-width="1.500"/></svg></div><div class="a" style="left:6px;top:25px;width:599px;height:128px;box-sizing:border-box;border:1px solid #000;background:#f1effd"></div><!--FROND--><div class="t" style="left:12px;top:154px;font-size:11px;line-height:13px">Location: Internal</div><div class="t" style="left:12px;top:167px;font-size:11px;line-height:13px;letter-spacing:-.3px">Format: DXT1</div><div class="btn" style="left:308px;top:156px;width:294px">Internalize</div><div class="btn" style="left:9px;top:183px;width:293px">Inject</div><div class="btn" style="left:308px;top:183px;width:294px">Extract</div></div><div class="pnl" style="top:544px;height:92px"><div class="ph"><b style="transform:scaleX(0.925)">Meta</b><svg style="left:588px;top:2px" width="18" height="18" viewBox="0 0 18 18"><circle cx="9" cy="9" r="7.500" fill="#f3f2fc" stroke="#c4c1dc" stroke-width="1"/><path d="M5.800 8.300 L9 5.300 L12.200 8.300 M5.800 12.300 L9 9.300 L12.200 12.300" fill="none" stroke="#1b2340" stroke-width="1.500"/></svg></div><svg style="left:8px;top:26px" width="19" height="18" viewBox="0 0 19 18"><defs><linearGradient id="gre" x1="0" y1="0" x2="0" y2="1"><stop offset="0" stop-color="#ff3b3b"/><stop offset=".45" stop-color="#f01414"/><stop offset="1" stop-color="#b80808"/></linearGradient><linearGradient id="ggr" x1="0" y1="0" x2="0" y2="1"><stop offset="0" stop-color="#4cc06a"/><stop offset=".45" stop-color="#1f9a45"/><stop offset="1" stop-color="#0f6a2a"/></linearGradient></defs><path d="M1.500 1.800 H12 Q17.500 1.800 17.500 7.300 V11.500 Q17.500 14.300 15 14.300 Q12.800 14.300 12.800 11.800 V11.300 H1.500 Z" fill="#a9a9bc" opacity=".75" transform="translate(.3,1.800)"/><path d="M1.500 1.800 H12 Q17.500 1.800 17.500 7.300 V11.500 Q17.500 14.300 15 14.300 Q12.800 14.300 12.800 11.800 V11.300 H1.500 Z" fill="url(#gre)"/><path d="M2 4.500 H11.500 Q14.500 4.800 14.800 8" fill="none" stroke="#ffb0b0" stroke-width="1.300" opacity=".9"/><path d="M1.500 6.500 H6 V8 H1.500 Z" fill="#ffd0d0" opacity=".7"/></svg><div class="t" style="left:28px;top:29px;font-size:12px;color:#3c3c52;letter-spacing:-.2px">Extract</div><svg style="left:8px;top:48px" width="19" height="18" viewBox="0 0 19 18"><path d="M17.500 1.500 V11.500 H6.200 V12.500 Q6.200 15 4 15 Q1.500 15 1.500 12.200 V8 Q1.500 2.800 7 2.800 H13 Z" fill="#a9a9bc" opacity=".75" transform="translate(.3,1.800)"/><path d="M17.500 1.500 V11.500 H6.200 V12.500 Q6.200 15 4 15 Q1.500 15 1.500 12.200 V8 Q1.500 2.800 7 2.800 H13 Z" fill="url(#ggr)"/><path d="M4 9.500 Q4.200 5.500 8 5.300 H15" fill="none" stroke="#b8f0c4" stroke-width="1.300" opacity=".9"/></svg><div class="t" style="left:28px;top:51px;font-size:12px;color:#3c3c52;letter-spacing:-.2px">Inject</div><svg style="left:11px;top:70px" width="14" height="18" viewBox="0 0 14 18"><path d="M1.500 3 L6 1 L11.500 3.500 V15 L7.500 16.800 L1.500 14.500 Z" fill="#e9e9ec" stroke="#4a4a50" stroke-width="1"/><path d="M6 1.200 L6.500 5.500 L11.300 3.700" fill="#fdfdfd" stroke="#6a6a70" stroke-width=".8"/><path d="M9.300 5 V15.800" stroke="#8a8a92" stroke-width=".9"/><path d="M2.500 4 V14" stroke="#fff" stroke-width="1"/></svg><div class="t" style="left:28px;top:73px;font-size:12px;color:#3c3c52;letter-spacing:-.2px">Duplicate</div></div><div class="a" style="left:1261px;top:120px;width:16px;height:852px;background:linear-gradient(90deg,#e9e9f2,#f6f6fb 40%,#fdfdff)"></div><div class="a" style="left:1261px;top:120px;width:16px;height:17px;box-sizing:border-box;border:1px solid #9b9cb4;border-radius:2px;background:linear-gradient(#fff 0,#fafafd 35%,#d6d6e5 62%,#c9c9dc 100%)"><svg style="left:-1px;top:-1px" width="16" height="17" viewBox="0 0 16 17"><path d="M4.200 10.200 L8 6.400 L11.800 10.200" fill="none" stroke="#33333d" stroke-width="2.700"/></svg></div><div class="a" style="left:1261px;top:955px;width:16px;height:17px;box-sizing:border-box;border:1px solid #9b9cb4;border-radius:2px;background:linear-gradient(#fff 0,#fafafd 35%,#d6d6e5 62%,#c9c9dc 100%)"><svg style="left:-1px;top:-1px" width="16" height="17" viewBox="0 0 16 17"><path d="M4.200 7 L8 10.800 L11.800 7" fill="none" stroke="#33333d" stroke-width="2.700"/></svg></div><div class="a" style="left:1261px;top:137px;width:16px;height:621px;box-sizing:border-box;border:1px solid #9b9cb4;border-radius:2px;background:linear-gradient(90deg,#fcfcfe,#e9e9f2 50%,#c8c8da)"></div><div class="a" style="left:1266px;top:444px;width:6px;height:1px;background:#8a8ba4"></div><div class="a" style="left:1266px;top:446px;width:6px;height:1px;background:#8a8ba4"></div><div class="a" style="left:1266px;top:448px;width:6px;height:1px;background:#8a8ba4"></div><div class="a" style="left:1266px;top:450px;width:6px;height:1px;background:#8a8ba4"></div><div class="a" style="left:1277px;top:119px;width:1px;height:853px;background:#7f9fd4"></div><div class="a" style="left:1277px;top:52px;width:1px;height:66px;background:#d7e5fa"></div><div class="a" style="left:1278px;top:52px;width:2px;height:920px;background:#f8f5ee"></div><div class="a" style="left:0;top:972px;width:1280px;height:20px;background:linear-gradient(#efeff6 0,#e0e0ec 3px,#cdcddf 9px,#b9b9d0 15px,#a8a8c4 19px,#7e7ea0 19px,#7e7ea0 20px)"></div><div class="a" style="left:0;top:972px;width:1px;height:20px;background:#a9a9ae"></div><div class="a" style="left:1px;top:972px;width:1px;height:20px;background:#6f6d64"></div><div class="t" style="left:3px;top:975px;font-size:11px;letter-spacing:-.15px">19:5:14 - Map Closed</div><div class="a" style="left:1181px;top:974px;width:96px;height:16px;box-sizing:border-box;border:1px solid #8284a4;border-bottom-color:#7a7c9c;background:linear-gradient(#dadae8,#b6b6ce)"></div><div class="a" style="left:0;top:992px;width:1280px;height:32px;background:linear-gradient(#fffef4 0,#fffffa 2px,#8c8cb0 2px,#8c8cb0 3px,#fff 3px,#fff 5px,#e2e2ec 5.500px,#c6c6d8 7px,#b0b0c8 9px,#a9a9c2 11px,#bcbcd0 16px,#d8d8e2 22px,#e6e6ec 26px,#e8e8ee 28px,#d0d0de 29.500px,#aaaac6 30.500px,#9a9aba 32px)"></div><div class="a" style="left:1170px;top:992px;width:110px;height:32px;background:linear-gradient(#fffffa 0,#fff 6px,#f4f4f8 12px,#e6e6ee 20px,#d0d0de 26px,#b0b0c8 30px,#9c9cbc 32px)"></div><div class="a" style="left:1169px;top:994px;width:1px;height:30px;background:#5e5e8a"></div><svg style="left:0;top:994px" width="100" height="30" viewBox="0 0 100 30"><defs><linearGradient id="sg" x1="0" y1="0" x2="0" y2="1"><stop offset="0" stop-color="#2d8a2d"/><stop offset=".07" stop-color="#6cc468"/><stop offset=".2" stop-color="#4aa848"/><stop offset=".5" stop-color="#3d9a3c"/><stop offset=".85" stop-color="#379336"/><stop offset="1" stop-color="#256f25"/></linearGradient><linearGradient id="sg2" x1="0" y1="0" x2="1" y2="0"><stop offset="0" stop-color="#fff" stop-opacity="0"/><stop offset=".85" stop-color="#fff" stop-opacity="0"/><stop offset=".93" stop-color="#1d5f1d" stop-opacity=".45"/><stop offset="1" stop-color="#1d5f1d" stop-opacity=".2"/></linearGradient></defs><path d="M0 0 H89 Q97.500 7 97.500 15 Q97.500 24 93 30 H0 Z" fill="url(#sg)"/><path d="M0 0 H89 Q97.500 7 97.500 15 Q97.500 24 93 30 H0 Z" fill="url(#sg2)"/><path d="M0 4.500 H88" stroke="#a8e0a4" stroke-width="1" opacity=".8"/><path d="M89 .5 Q97 7 97 15 Q97 24 92.500 29.500" fill="none" stroke="#1d661d" stroke-width="1.200"/><path d="M86.500 2 Q93.500 8 93.500 15 Q93.500 23 89.500 28.500" fill="none" stroke="#8fd88a" stroke-width="1" opacity=".55"/><g transform="translate(9.500,5.500) scale(1.08)" stroke="#2a4a2a" stroke-width=".5" stroke-opacity=".6"><path d="M3 1.500 Q6 -.5 9.500 1.500 L8.200 8 Q5 6 1.800 8 Z" fill="#f0562a"/><path d="M10.500 2 Q14 4 17.500 2 L16.200 8.500 Q13 10.500 9.200 8.500 Z" fill="#7cc230"/><path d="M1.500 9 Q5 7 8 9 L6.700 15.500 Q3.500 13.500 .2 15.500 Z" fill="#3f7fe0"/><path d="M9 9.500 Q12.500 11.500 16 9.500 L14.700 16 Q11.500 18 7.700 16 Z" fill="#f8c820"/></g><text x="36" y="21" font-family="Liberation Sans,sans-serif" font-size="17.500" font-weight="bold" font-style="italic" fill="#1a4f1a" opacity=".6" letter-spacing="-.3">start</text><text x="35" y="20" font-family="Liberation Sans,sans-serif" font-size="17.500" font-weight="bold" font-style="italic" fill="#fff" letter-spacing="-.3">start</text></svg><svg style="left:106px;top:998px" width="90" height="22" viewBox="0 0 90 22"><defs><radialGradient id="ql1" cx=".45" cy=".3" r=".7"><stop offset="0" stop-color="#9cc8f8"/><stop offset=".5" stop-color="#2f6fd0"/><stop offset="1" stop-color="#123a8a"/></radialGradient><radialGradient id="ql2" cx=".4" cy=".35" r=".7"><stop offset="0" stop-color="#a8d8f8"/><stop offset=".6" stop-color="#2f78c8"/><stop offset="1" stop-color="#1a4a98"/></radialGradient></defs><ellipse cx="11" cy="10.200" rx="7.300" ry="7" fill="#0f3f9a"/><ellipse cx="11" cy="11.800" rx="6.600" ry="5" fill="#1a58b8"/><ellipse cx="11" cy="8.800" rx="5.600" ry="4.800" fill="url(#ql1)"/><ellipse cx="11" cy="5.800" rx="3.200" ry="1.300" fill="#d8ecff" opacity=".9"/><circle cx="33.800" cy="10.500" r="5.700" fill="url(#ql2)"/><path d="M29.500 8 Q31 5.500 34 5.200 Q35 7 33 8.500 Q34.500 10 32.500 11.500 Q30.500 10.500 29.500 8 Z M35.500 6 Q38 6.500 38.800 9 Q37 9.500 36 8 Z" fill="#2c6e2c"/><path d="M26.200 14.800 Q32.500 6.500 41 4.800" fill="none" stroke="#e01818" stroke-width="1.700"/><path d="M39.500 3.200 Q43.500 4 41.800 8.500" fill="none" stroke="#e01818" stroke-width="1.700"/><circle cx="57" cy="10.300" r="7.600" fill="#e8781a"/><circle cx="58.200" cy="8.800" r="5" fill="#2448b0"/><path d="M56 5 Q59 3.500 61.500 6 Q60 8 61 11 Q58.500 12 57 10 Q58.500 8 56 5 Z" fill="#3a9ad8"/><path d="M49.500 8.500 Q50 4.500 52.500 3.500 Q53 5 55 5.200 Q53.500 7 54.500 9 Q56 9.500 57 11.500 Q55.500 13 57.500 14.500 Q61 14.500 63 11 Q64 8.500 63 6 Q65.500 9.500 64.300 13 Q62.500 17.500 57.500 18 Q51 18 49.500 12 Z" fill="#f08a1c"/><path d="M62.500 5.500 Q65 8.500 64.300 12.500 Q63 16.500 59 17.600 Q63 15 63.200 10.500 Q63.300 7.500 62.500 5.500 Z" fill="#f8c430"/><path d="M50 8 Q50.500 5 52.300 4 Q52.800 5.300 54.500 5.500 Q52.500 6.500 52.500 9 Z" fill="#f8b030"/><path d="M77.300 3 L79.800 5.400 L77.300 7.800 M81.500 3 L84 5.400 L81.500 7.800" fill="none" stroke="#000" stroke-width="1.500"/></svg><div class="tk" style="left:199px;width:136px;"><svg style="left:7px;top:3px" width="16" height="16" viewBox="0 0 16 16"><rect x="0" y="0" width="8.500" height="16" fill="#1a6ad8"/><rect x="8.500" y="0" width="7.500" height="16" fill="#5cb41c"/><rect x="0" y="13" width="8.500" height="3" fill="#0a2a70"/><rect x="8.500" y="13" width="7.500" height="3" fill="#2a6a0c"/><path d="M1.200 8.200 Q1.200 3 8 3 Q14.800 3 14.800 8 Q14.800 12.600 8 12.600 Q6.500 12.600 5.500 12.300 L3 14 L3.500 11.500 Q1.200 10.300 1.200 8.200 Z" fill="#fff" stroke="#0c2a60" stroke-width=".5"/><text x="2.300" y="10.300" font-family="Liberation Sans,sans-serif" font-size="6.500" font-weight="bold" fill="#1a5ad0" letter-spacing="-.3">AI</text><text x="8" y="10.300" font-family="Liberation Sans,sans-serif" font-size="6.500" font-weight="bold" fill="#4ca814">M</text></svg><span>AIM Pro</span></div><div class="tk" style="left:336px;width:136px;"><svg style="left:7px;top:4px" width="15" height="14" viewBox="0 0 17 16"><circle cx="5" cy="4" r="2.800" fill="#3f8fe0" stroke="#2467b8" stroke-width=".6"/><path d="M.5 13 Q.5 7 5 7 Q9.500 7 9.500 13 Q5 15 .5 13 Z" fill="#3f8fe0" stroke="#2467b8" stroke-width=".6"/><circle cx="11.500" cy="5.500" r="3" fill="#58c04a" stroke="#2f8a28" stroke-width=".6"/><path d="M6.500 15 Q6.500 8.800 11.500 8.800 Q16.500 8.800 16.500 15 Q11.500 17 6.500 15 Z" fill="#58c04a" stroke="#2f8a28" stroke-width=".6"/></svg><span>Windows Live M...</span></div><div class="tk" style="left:472px;width:136px;"><svg style="left:8px;top:4px" width="17" height="14" viewBox="0 0 17 14"><path d="M.8 3 Q.8 1 2.800 1 H6 Q6.800 1 7.300 1.800 L8 2.800 H12.500 Q13.800 2.800 13.800 4.200 V12 H.8 Z" fill="#e6b41c" stroke="#bf8c0a" stroke-width="1"/><path d="M2 2.200 H6 L6.800 3.600 H12.500 V5 H2 Z" fill="#fff6cc"/><path d="M3.800 5.300 H15.800 L13.800 12.600 H1.300 Z" fill="#f8d650" stroke="#c4940c" stroke-width="1"/><path d="M4.500 6.300 H14.500 L14 8 H4 Z" fill="#fff4b0" opacity=".9"/></svg><span>Ceiling-Cat</span></div><div class="tk" style="left:609px;width:136px;"><svg style="left:8px;top:4px" width="17" height="14" viewBox="0 0 17 14"><path d="M.8 3 Q.8 1 2.800 1 H6 Q6.800 1 7.300 1.800 L8 2.800 H12.500 Q13.800 2.800 13.800 4.200 V12 H.8 Z" fill="#e6b41c" stroke="#bf8c0a" stroke-width="1"/><path d="M2 2.200 H6 L6.800 3.600 H12.500 V5 H2 Z" fill="#fff6cc"/><path d="M3.800 5.300 H15.800 L13.800 12.600 H1.300 Z" fill="#f8d650" stroke="#c4940c" stroke-width="1"/><path d="M4.500 6.300 H14.500 L14 8 H4 Z" fill="#fff4b0" opacity=".9"/></svg><span>Entity 1.3</span></div><div class="tk" style="left:746px;width:136px;"><svg style="left:8px;top:4px" width="18" height="14" viewBox="0 0 18 14"><path d="M1 7 L5 3 L9 7 L5 11 Z" fill="#3f8ad8"/><path d="M9 7 L13 3 L17 7 L13 11 Z" fill="#f0b020"/><path d="M5 11 L11 2 L14 3.500 L8 12.500 Z" fill="#e8472a"/><path d="M5 3 L8 1.500 L10 4 Z" fill="#58b038"/></svg><span>Ceiling-Cat (Run...</span></div><div class="tk" style="left:882px;width:136px;"><svg style="left:8px;top:2px" width="18" height="18" viewBox="0 0 18 18"><rect x=".7" y=".7" width="13.600" height="11.600" fill="#eaf6e0" stroke="#2f9a2f" stroke-width="1.400"/><text x="7.500" y="10" font-family="Liberation Sans,sans-serif" font-size="9" font-weight="bold" fill="#1f7a1f" text-anchor="middle" letter-spacing="-.5">c#</text><path d="M4 14.500 H13 M10.500 11.800 L13.500 14.500 L10.500 17.200" fill="none" stroke="#2a62d0" stroke-width="1.800"/></svg><span>entity - Microsof...</span></div><div class="tk" style="left:1019px;width:137px;background:linear-gradient(#62717d,#73828e 50%,#88949f);border-color:#55656f #5a6c7a #5a6c7a #55656f;box-shadow:none;color:#fff"><svg style="left:8px;top:4px" width="14" height="14" viewBox="0 0 14 14"><rect x="0" y="0" width="14" height="14" fill="#7c8594"/><rect x="0.500" y="0.500" width="4" height="4" fill="#98a0ae"/><rect x="1" y="10" width="2" height="3" fill="#d4d8e0"/><rect x="3.500" y="10" width="1.500" height="3" fill="#d4d8e0"/><rect x="11.500" y="9" width="1.500" height="4" fill="#d4d8e0"/><rect x="6" y="1" width="7" height="7" fill="#c79a13"/><rect x="7" y="2" width="5" height="5" fill="#fcd84a"/><rect x="7" y="2" width="4" height="3" fill="#fff0a0"/><rect x="1" y="5" width="4" height="5" fill="#a30f0f"/><rect x="2" y="6" width="2" height="3" fill="#e84a3a"/><rect x="6" y="9" width="5" height="4" fill="#2f6fd0"/><rect x="7" y="10" width="3" height="2" fill="#7fb0f4"/></svg><span>Ceiling-Cat - [sc...</span></div><svg style="left:1158px;top:998px" width="122" height="24" viewBox="0 0 122 24"><defs><linearGradient id="trg" x1="0" y1="0" x2="0" y2="1"><stop offset="0" stop-color="#54ee3c"/><stop offset=".5" stop-color="#7cf464"/><stop offset="1" stop-color="#dcfad0"/></linearGradient><radialGradient id="trc" cx=".4" cy=".35" r=".7"><stop offset="0" stop-color="#f4f4fa"/><stop offset=".6" stop-color="#b4b4d0"/><stop offset="1" stop-color="#7c7ca4"/></radialGradient></defs><circle cx="10.800" cy="11" r="8.300" fill="url(#trc)" stroke="#3c3c5c" stroke-width="1.200"/><path d="M13.300 6.800 L9 11 L13.300 15.200" fill="none" stroke="#8a8ab0" stroke-width="3.600" stroke-linejoin="miter"/><path d="M13.300 6.800 L9 11 L13.300 15.200" fill="none" stroke="#fff" stroke-width="2.500" stroke-linejoin="miter"/><rect x="23.600" y="3.600" width="12.300" height="14.800" fill="url(#trg)" stroke="#8e0808" stroke-width="1.200"/><path d="M27 8 H32.500 L31 12.500 H28.500 Z" fill="#0c1460"/><path d="M25.500 6.500 L28 9 M34 6.500 L31.500 9 M28.800 12 L26.500 15 M30.800 12 L33 15" stroke="#2a3a50" stroke-width=".9" fill="none"/><circle cx="47" cy="8" r="3.600" fill="#6cc850" stroke="#3a982a" stroke-width=".7"/><path d="M40.500 18 Q40.500 11.500 47 11.500 Q53.500 11.500 53.500 18 Q47 20.500 40.500 18 Z" fill="#6cc850" stroke="#3a982a" stroke-width=".7"/><rect x="59" y="3" width="15" height="17" fill="#101010"/><rect x="60" y="4.5" width="6" height="1.600" fill="#e02828"/><rect x="67" y="4.5" width="6" height="1.600" fill="#18a838"/><rect x="60" y="7.1" width="6" height="1.600" fill="#e02828"/><rect x="67" y="7.1" width="6" height="1.600" fill="#18a838"/><rect x="60" y="9.7" width="6" height="1.600" fill="#e02828"/><rect x="67" y="9.7" width="6" height="1.600" fill="#18a838"/><rect x="60" y="12.3" width="6" height="1.600" fill="#e02828"/><rect x="67" y="12.3" width="6" height="1.600" fill="#18a838"/><rect x="60" y="14.9" width="6" height="1.600" fill="#e02828"/><rect x="67" y="14.9" width="6" height="1.600" fill="#18a838"/><rect x="60" y="17.5" width="6" height="1.600" fill="#e02828"/><rect x="67" y="17.5" width="6" height="1.600" fill="#40ff60"/></svg><div class="t" style="left:1239px;top:1002px;font-size:11px;letter-spacing:0;color:#000">19:05</div><svg style="left:652px;top:345px;overflow:hidden" width="512" height="126" viewBox="0 0 512 126"><defs><linearGradient id="fbg" x1="0" y1="0" x2="1" y2="0"><stop offset="0" stop-color="#2b2f1f"/><stop offset=".25" stop-color="#262b1c"/><stop offset=".6" stop-color="#181e15"/><stop offset=".8" stop-color="#121911"/><stop offset="1" stop-color="#101913"/></linearGradient><radialGradient id="fgl" cx="0" cy="0" r="1" gradientUnits="userSpaceOnUse" gradientTransform="translate(215 124) scale(230 125)"><stop offset="0" stop-color="#2c4234" stop-opacity=".9"/><stop offset=".55" stop-color="#22342a" stop-opacity=".6"/><stop offset="1" stop-color="#1c2a20" stop-opacity="0"/></radialGradient><linearGradient id="fbl" x1="0" y1="0" x2="0" y2="126" gradientUnits="userSpaceOnUse"><stop offset="0" stop-color="#6a7a58"/><stop offset=".2" stop-color="#4e6a56"/><stop offset=".55" stop-color="#5a806a"/><stop offset=".8" stop-color="#40584a"/><stop offset="1" stop-color="#3a3a22"/></linearGradient><radialGradient id="ffan" cx="0" cy="0" r="1" gradientUnits="userSpaceOnUse" gradientTransform="translate(191 124) scale(195 125)"><stop offset="0" stop-color="#3e3c24"/><stop offset=".15" stop-color="#42583f"/><stop offset=".45" stop-color="#5c826a"/><stop offset=".8" stop-color="#506e5a"/><stop offset="1" stop-color="#566648"/></radialGradient><linearGradient id="fdk" x1="0" y1="0" x2="1" y2="0"><stop offset="0" stop-color="#000" stop-opacity="0"/><stop offset=".62" stop-color="#000" stop-opacity="0"/><stop offset=".9" stop-color="#060a06" stop-opacity=".35"/></linearGradient></defs><rect width="512" height="126" fill="url(#fbg)"/><rect width="512" height="126" fill="url(#fgl)"/><path d="M198.2 124.2 L188.2 92.8 L178.9 55.6 L171.0 18.0 L182.7 54.6 L193.0 91.6 L199.8 123.8Z" fill="#25382c" opacity="0.35" stroke="#263628" stroke-width=".8"/><path d="M210.1 124.2 L202.0 95.1 L194.7 60.7 L189.0 26.0 L198.7 59.9 L206.8 94.1 L211.9 123.8Z" fill="#25382c" opacity="0.35" stroke="#263628" stroke-width=".8"/><path d="M219.1 124.1 L212.4 91.7 L207.0 53.5 L203.0 15.0 L210.9 52.8 L217.4 90.9 L220.9 123.9Z" fill="#25382c" opacity="0.35" stroke="#263628" stroke-width=".8"/><path d="M228.1 124.1 L224.1 92.1 L221.8 54.6 L221.0 17.0 L225.8 54.3 L229.1 91.7 L229.9 123.9Z" fill="#25382c" opacity="0.35" stroke="#263628" stroke-width=".8"/><path d="M230.1 124.0 L229.1 93.7 L230.3 58.3 L233.0 23.0 L234.3 58.4 L234.1 93.7 L231.9 124.0Z" fill="#25382c" opacity="0.35" stroke="#263628" stroke-width=".8"/><path d="M242.1 124.0 L241.1 91.3 L242.3 53.1 L245.0 15.0 L246.3 53.2 L246.1 91.3 L243.9 124.0Z" fill="#25382c" opacity="0.35" stroke="#263628" stroke-width=".8"/><path d="M253.1 124.0 L251.8 92.2 L252.7 55.1 L255.0 18.0 L256.6 55.1 L256.8 92.2 L254.9 124.0Z" fill="#25382c" opacity="0.35" stroke="#263628" stroke-width=".8"/><path d="M267.1 124.0 L266.7 93.9 L268.6 58.9 L272.0 24.0 L272.6 59.1 L271.7 94.1 L268.9 124.0Z" fill="#25382c" opacity="0.35" stroke="#263628" stroke-width=".8"/><path d="M280.1 124.0 L279.1 93.1 L280.3 57.0 L283.0 21.0 L284.3 57.1 L284.1 93.1 L281.9 124.0Z" fill="#25382c" opacity="0.35" stroke="#263628" stroke-width=".8"/><path d="M291.1 124.0 L290.1 93.4 L291.3 57.7 L294.0 22.0 L295.3 57.7 L295.1 93.4 L292.9 124.0Z" fill="#25382c" opacity="0.35" stroke="#263628" stroke-width=".8"/><path d="M301.1 124.0 L299.8 92.5 L300.7 55.7 L303.0 19.0 L304.6 55.8 L304.8 92.5 L302.9 124.0Z" fill="#25382c" opacity="0.35" stroke="#263628" stroke-width=".8"/><path d="M308.1 124.0 L305.0 92.3 L303.8 55.2 L304.0 18.0 L307.7 55.0 L310.0 92.1 L309.9 124.0Z" fill="#25382c" opacity="0.35" stroke="#263628" stroke-width=".8"/><path d="M313.1 124.0 L310.6 92.9 L310.1 56.5 L311.0 20.0 L314.0 56.3 L315.6 92.7 L314.9 124.0Z" fill="#25382c" opacity="0.35" stroke="#263628" stroke-width=".8"/><path d="M318.1 124.0 L315.9 94.7 L315.7 60.3 L317.0 26.0 L319.7 60.3 L320.9 94.5 L319.9 124.0Z" fill="#25382c" opacity="0.35" stroke="#263628" stroke-width=".8"/><path d="M325.1 124.0 L323.2 95.2 L323.4 61.6 L325.0 28.0 L327.3 61.6 L328.2 95.2 L326.9 124.0Z" fill="#25382c" opacity="0.35" stroke="#263628" stroke-width=".8"/><path d="M334.1 124.0 L331.9 91.0 L331.7 52.5 L333.0 14.0 L335.7 52.5 L336.9 91.0 L335.9 124.0Z" fill="#25382c" opacity="0.35" stroke="#263628" stroke-width=".8"/><path d="M340.1 124.0 L338.5 91.0 L339.0 52.5 L341.0 14.0 L343.0 52.5 L343.5 91.0 L341.9 124.0Z" fill="#25382c" opacity="0.35" stroke="#263628" stroke-width=".8"/><path d="M344.1 124.0 L344.0 91.5 L346.3 53.7 L350.0 16.0 L350.2 53.9 L349.0 91.7 L345.9 124.0Z" fill="#25382c" opacity="0.35" stroke="#263628" stroke-width=".8"/><path d="M350.1 123.9 L350.9 92.0 L354.2 54.9 L359.0 18.0 L358.2 55.3 L355.9 92.4 L351.9 124.1Z" fill="#25382c" opacity="0.35" stroke="#263628" stroke-width=".8"/><path d="M362.1 124.0 L361.4 91.8 L363.0 54.4 L366.0 17.0 L366.9 54.5 L366.4 92.0 L363.9 124.0Z" fill="#25382c" opacity="0.35" stroke="#263628" stroke-width=".8"/><path d="M368.1 124.0 L367.7 95.7 L369.6 62.8 L373.0 30.0 L373.6 63.0 L372.7 95.9 L369.9 124.0Z" fill="#25382c" opacity="0.35" stroke="#263628" stroke-width=".8"/><path d="M380.1 124.0 L378.5 93.4 L379.0 57.7 L381.0 22.0 L383.0 57.7 L383.5 93.4 L381.9 124.0Z" fill="#25382c" opacity="0.35" stroke="#263628" stroke-width=".8"/><path d="M390.1 124.0 L389.1 94.8 L390.3 60.9 L393.0 27.0 L394.3 61.0 L394.1 95.0 L391.9 124.0Z" fill="#25382c" opacity="0.35" stroke="#263628" stroke-width=".8"/><path d="M398.1 124.0 L398.0 95.7 L400.3 62.8 L404.0 30.0 L404.2 63.0 L403.0 95.9 L399.9 124.0Z" fill="#25382c" opacity="0.35" stroke="#263628" stroke-width=".8"/><path d="M406.1 123.9 L406.3 102.2 L408.9 77.0 L413.0 52.0 L412.9 77.4 L411.3 102.6 L407.9 124.1Z" fill="#25382c" opacity="0.35" stroke="#263628" stroke-width=".8"/><path d="M413.1 124.0 L412.4 100.5 L414.0 73.2 L417.0 46.0 L417.9 73.4 L417.4 100.7 L414.9 124.0Z" fill="#25382c" opacity="0.35" stroke="#263628" stroke-width=".8"/><path d="M420.1 124.0 L418.2 101.5 L418.4 75.3 L420.0 49.0 L422.3 75.2 L423.2 101.5 L421.9 124.0Z" fill="#25382c" opacity="0.35" stroke="#263628" stroke-width=".8"/><path d="M424.1 124.0 L423.1 98.7 L424.3 69.4 L427.0 40.0 L428.3 69.4 L428.1 98.9 L425.9 124.0Z" fill="#25382c" opacity="0.35" stroke="#263628" stroke-width=".8"/><path d="M432.1 124.0 L431.4 102.9 L433.0 78.4 L436.0 54.0 L436.9 78.6 L436.4 103.1 L433.9 124.0Z" fill="#25382c" opacity="0.35" stroke="#263628" stroke-width=".8"/><path d="M440.1 123.9 L439.7 109.1 L441.6 92.0 L445.0 75.0 L445.6 92.3 L444.7 109.5 L441.9 124.1Z" fill="#25382c" opacity="0.35" stroke="#263628" stroke-width=".8"/><path d="M354.1 124.0 L352.5 97.9 L353.0 67.4 L355.0 37.0 L357.0 67.4 L357.5 97.9 L355.9 124.0Z" fill="#25382c" opacity="0.35" stroke="#263628" stroke-width=".8"/><path d="M386.1 124.0 L384.2 97.3 L384.4 66.2 L386.0 35.0 L388.3 66.1 L389.2 97.3 L387.9 124.0Z" fill="#25382c" opacity="0.35" stroke="#263628" stroke-width=".8"/><path d="M373.1 124.0 L370.9 112.4 L370.7 98.8 L372.0 85.0 L374.7 98.5 L375.9 112.2 L374.9 124.0Z" fill="#25382c" opacity="0.35" stroke="#263628" stroke-width=".8"/><path d="M191.0 125.3 L95.5 126.7 L47.7 125.5 L0.0 122.0 L47.8 119.5 L95.5 119.3 L191.0 122.7Z" fill="url(#ffan)" opacity="1" stroke="#263628" stroke-width=".8"/><path d="M190.9 125.3 L95.8 123.7 L48.4 121.0 L1.0 116.0 L48.6 115.0 L96.2 116.3 L191.1 122.7Z" fill="url(#ffan)" opacity="1" stroke="#263628" stroke-width=".8"/><path d="M190.9 125.3 L97.2 119.2 L50.5 114.2 L4.0 107.0 L51.0 108.3 L97.8 111.8 L191.1 122.7Z" fill="url(#ffan)" opacity="1" stroke="#263628" stroke-width=".8"/><path d="M190.8 125.3 L99.5 116.2 L54.1 109.7 L9.0 101.0 L54.9 103.8 L100.5 108.8 L191.2 122.7Z" fill="url(#ffan)" opacity="1" stroke="#263628" stroke-width=".8"/><path d="M190.7 125.3 L106.1 106.1 L64.3 94.7 L23.0 81.0 L65.7 88.8 L107.9 98.9 L191.3 122.7Z" fill="url(#ffan)" opacity="1" stroke="#263628" stroke-width=".8"/><path d="M190.6 125.2 L110.8 100.5 L71.5 86.3 L33.0 70.0 L73.5 80.7 L113.2 93.5 L191.4 122.8Z" fill="url(#ffan)" opacity="1" stroke="#263628" stroke-width=".8"/><path d="M190.4 125.2 L120.3 91.8 L86.1 73.4 L53.0 53.0 L88.9 68.1 L123.7 85.2 L191.6 122.8Z" fill="url(#ffan)" opacity="1" stroke="#263628" stroke-width=".8"/><path d="M190.4 125.2 L123.8 94.3 L91.4 77.2 L60.0 58.0 L94.1 71.8 L127.2 87.7 L191.6 122.8Z" fill="url(#ffan)" opacity="1" stroke="#263628" stroke-width=".8"/><path d="M190.2 125.1 L133.3 86.0 L106.0 64.9 L80.0 42.0 L109.5 60.1 L137.7 80.0 L191.8 122.9Z" fill="url(#ffan)" opacity="1" stroke="#263628" stroke-width=".8"/><path d="M190.2 125.1 L135.3 88.0 L109.0 67.9 L84.0 46.0 L112.5 63.1 L139.7 82.0 L191.8 122.9Z" fill="url(#ffan)" opacity="1" stroke="#263628" stroke-width=".8"/><path d="M190.1 124.9 L140.4 79.7 L116.9 55.6 L95.0 30.0 L121.1 51.4 L145.6 74.3 L191.9 123.1Z" fill="url(#ffan)" opacity="1" stroke="#263628" stroke-width=".8"/><path d="M190.1 124.9 L142.8 81.2 L120.6 57.9 L100.0 33.0 L124.9 53.6 L148.2 75.8 L191.9 123.1Z" fill="url(#ffan)" opacity="1" stroke="#263628" stroke-width=".8"/><path d="M190.0 124.8 L149.5 75.3 L130.9 49.3 L114.0 22.0 L135.6 45.7 L155.5 70.7 L192.0 123.2Z" fill="url(#ffan)" opacity="1" stroke="#263628" stroke-width=".8"/><path d="M189.9 124.8 L151.5 76.2 L133.8 50.8 L118.0 24.0 L138.7 47.2 L157.5 71.8 L192.1 123.2Z" fill="url(#ffan)" opacity="1" stroke="#263628" stroke-width=".8"/><path d="M189.8 124.6 L159.6 69.7 L146.3 41.3 L135.0 12.0 L151.7 38.7 L166.4 66.3 L192.2 123.4Z" fill="url(#ffan)" opacity="1" stroke="#263628" stroke-width=".8"/><path d="M189.8 124.5 L162.6 70.0 L150.8 42.0 L141.0 13.0 L156.2 39.5 L169.4 67.0 L192.2 123.5Z" fill="url(#ffan)" opacity="1" stroke="#263628" stroke-width=".8"/><path d="M194.8 125.3 L182.4 84.9 L172.9 43.8 L167.0 8.0 L178.5 42.4 L189.3 83.2 L197.2 124.7Z" fill="url(#fbl)" opacity="1" stroke="#263628" stroke-width=".8"/><path d="M206.8 125.3 L196.4 87.6 L189.1 49.3 L185.0 16.0 L194.7 48.1 L203.5 86.1 L209.2 124.7Z" fill="url(#fbl)" opacity="1" stroke="#263628" stroke-width=".8"/><path d="M215.8 125.2 L207.1 83.5 L201.6 41.4 L199.0 5.0 L207.2 40.6 L214.3 82.5 L218.2 124.8Z" fill="url(#fbl)" opacity="1" stroke="#263628" stroke-width=".8"/><path d="M224.7 125.1 L219.3 84.0 L216.8 42.6 L217.0 7.0 L222.6 42.2 L226.4 83.4 L227.3 124.9Z" fill="url(#fbl)" opacity="1" stroke="#263628" stroke-width=".8"/><path d="M226.7 125.0 L224.8 85.8 L225.8 46.6 L229.0 13.0 L231.6 46.6 L231.9 85.8 L229.3 125.0Z" fill="url(#fbl)" opacity="1" stroke="#263628" stroke-width=".8"/><path d="M238.7 125.0 L236.8 83.0 L237.8 41.0 L241.0 5.0 L243.6 41.0 L243.9 83.0 L241.3 125.0Z" fill="url(#fbl)" opacity="1" stroke="#263628" stroke-width=".8"/><path d="M249.7 125.0 L247.4 84.1 L248.1 43.1 L251.0 8.0 L253.9 43.1 L254.6 84.1 L252.3 125.0Z" fill="url(#fbl)" opacity="1" stroke="#263628" stroke-width=".8"/><path d="M263.7 125.0 L262.5 86.1 L264.2 47.2 L268.0 14.0 L270.0 47.4 L269.6 86.2 L266.3 125.0Z" fill="url(#fbl)" opacity="1" stroke="#263628" stroke-width=".8"/><path d="M276.7 125.0 L274.8 85.1 L275.8 45.2 L279.0 11.0 L281.6 45.2 L281.9 85.1 L279.3 125.0Z" fill="url(#fbl)" opacity="1" stroke="#263628" stroke-width=".8"/><path d="M287.7 125.0 L285.8 85.4 L286.8 45.9 L290.0 12.0 L292.6 45.9 L292.9 85.5 L290.3 125.0Z" fill="url(#fbl)" opacity="1" stroke="#263628" stroke-width=".8"/><path d="M297.7 125.0 L295.4 84.4 L296.1 43.8 L299.0 9.0 L301.9 43.8 L302.6 84.4 L300.3 125.0Z" fill="url(#fbl)" opacity="1" stroke="#263628" stroke-width=".8"/><path d="M304.7 125.1 L300.3 84.2 L298.9 43.2 L300.0 8.0 L304.7 43.0 L307.5 83.9 L307.3 124.9Z" fill="url(#fbl)" opacity="1" stroke="#263628" stroke-width=".8"/><path d="M309.7 125.0 L306.0 84.9 L305.3 44.6 L307.0 10.0 L311.1 44.4 L313.2 84.6 L312.3 125.0Z" fill="url(#fbl)" opacity="1" stroke="#263628" stroke-width=".8"/><path d="M314.7 125.0 L311.4 86.9 L311.0 48.8 L313.0 16.0 L316.8 48.6 L318.5 86.8 L317.3 125.0Z" fill="url(#fbl)" opacity="1" stroke="#263628" stroke-width=".8"/><path d="M321.7 125.0 L318.7 87.6 L318.7 50.2 L321.0 18.0 L324.5 50.0 L325.9 87.5 L324.3 125.0Z" fill="url(#fbl)" opacity="1" stroke="#263628" stroke-width=".8"/><path d="M330.7 125.0 L327.4 82.7 L327.0 40.4 L329.0 4.0 L332.8 40.2 L334.5 82.6 L333.3 125.0Z" fill="url(#fbl)" opacity="1" stroke="#263628" stroke-width=".8"/><path d="M336.7 125.0 L334.1 82.7 L334.4 40.3 L337.0 4.0 L340.2 40.3 L341.2 82.6 L339.3 125.0Z" fill="url(#fbl)" opacity="1" stroke="#263628" stroke-width=".8"/><path d="M340.7 125.0 L339.8 83.2 L341.9 41.6 L346.0 6.0 L347.7 41.8 L347.0 83.5 L343.3 125.0Z" fill="url(#fbl)" opacity="1" stroke="#263628" stroke-width=".8"/><path d="M346.7 124.9 L346.9 83.8 L350.0 42.9 L355.0 8.0 L355.8 43.3 L354.0 84.3 L349.3 125.1Z" fill="url(#fbl)" opacity="1" stroke="#263628" stroke-width=".8"/><path d="M358.7 125.0 L357.1 83.6 L358.5 42.4 L362.0 7.0 L364.3 42.4 L364.3 83.8 L361.3 125.0Z" fill="url(#fbl)" opacity="1" stroke="#263628" stroke-width=".8"/><path d="M364.7 125.0 L363.5 88.1 L365.2 51.4 L369.0 20.0 L371.0 51.6 L370.6 88.4 L367.3 125.0Z" fill="url(#fbl)" opacity="1" stroke="#263628" stroke-width=".8"/><path d="M376.7 125.0 L374.1 85.5 L374.4 45.9 L377.0 12.0 L380.2 45.9 L381.2 85.4 L379.3 125.0Z" fill="url(#fbl)" opacity="1" stroke="#263628" stroke-width=".8"/><path d="M386.7 125.0 L384.8 87.2 L385.8 49.4 L389.0 17.0 L391.6 49.4 L391.9 87.2 L389.3 125.0Z" fill="url(#fbl)" opacity="1" stroke="#263628" stroke-width=".8"/><path d="M394.7 125.0 L393.8 88.1 L395.9 51.4 L400.0 20.0 L401.7 51.6 L401.0 88.4 L397.3 125.0Z" fill="url(#fbl)" opacity="1" stroke="#263628" stroke-width=".8"/><path d="M402.7 124.9 L402.2 95.7 L404.6 66.7 L409.0 42.0 L410.4 67.1 L409.3 96.2 L405.3 125.1Z" fill="url(#fbl)" opacity="1" stroke="#263628" stroke-width=".8"/><path d="M409.7 125.0 L408.1 93.8 L409.5 62.6 L413.0 36.0 L415.3 62.8 L415.3 93.9 L412.3 125.0Z" fill="url(#fbl)" opacity="1" stroke="#263628" stroke-width=".8"/><path d="M416.7 125.0 L413.7 95.0 L413.7 64.9 L416.0 39.0 L419.5 64.7 L420.9 94.8 L419.3 125.0Z" fill="url(#fbl)" opacity="1" stroke="#263628" stroke-width=".8"/><path d="M420.7 125.0 L418.8 91.7 L419.8 58.5 L423.0 30.0 L425.6 58.5 L425.9 91.8 L423.3 125.0Z" fill="url(#fbl)" opacity="1" stroke="#263628" stroke-width=".8"/><path d="M428.7 125.0 L427.1 96.6 L428.5 68.2 L432.0 44.0 L434.3 68.4 L434.3 96.7 L431.3 125.0Z" fill="url(#fbl)" opacity="1" stroke="#263628" stroke-width=".8"/><path d="M436.7 124.9 L435.5 103.8 L437.2 82.9 L441.0 65.0 L443.0 83.1 L442.6 104.2 L439.3 125.1Z" fill="url(#fbl)" opacity="1" stroke="#263628" stroke-width=".8"/><path d="M350.7 125.0 L348.1 90.7 L348.4 56.4 L351.0 27.0 L354.2 56.4 L355.2 90.7 L353.3 125.0Z" fill="url(#fbl)" opacity="1" stroke="#263628" stroke-width=".8"/><path d="M382.7 125.0 L379.7 90.1 L379.7 55.1 L382.0 25.0 L385.5 54.9 L386.9 89.9 L385.3 125.0Z" fill="url(#fbl)" opacity="1" stroke="#263628" stroke-width=".8"/><path d="M369.7 125.1 L366.4 107.7 L366.0 90.2 L368.0 75.0 L371.8 89.8 L373.5 107.3 L372.3 124.9Z" fill="url(#fbl)" opacity="1" stroke="#263628" stroke-width=".8"/><rect width="512" height="126" fill="url(#fdk)"/><path d="M190 124.500 H512" stroke="#5e5028" stroke-width="2.500"/><path d="M190 123.500 H470" stroke="#7a6a34" stroke-width="1" opacity=".8"/></svg></body></html>
